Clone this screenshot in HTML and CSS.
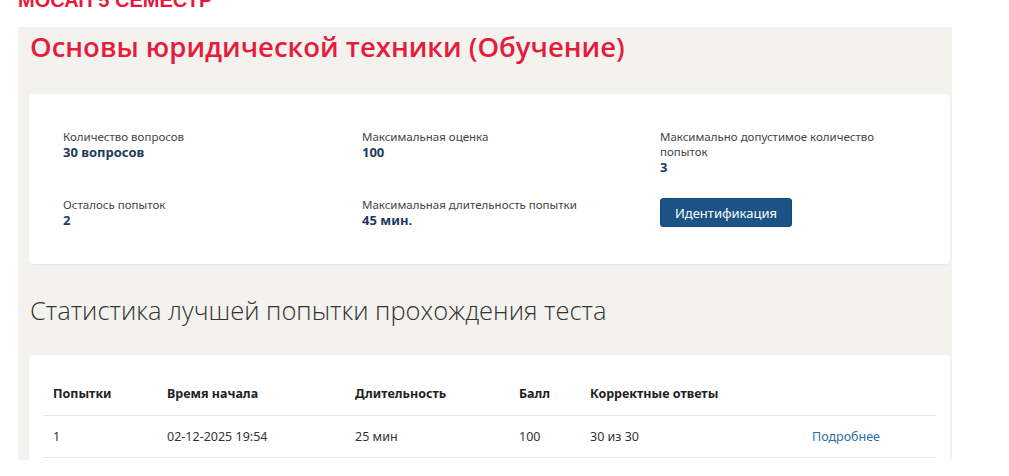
FILE: index.html
```html
<!DOCTYPE html>
<html lang="ru">
<head>
<meta charset="utf-8">
<title>Основы юридической техники</title>
<link rel="stylesheet" href="styles.css">
</head>
<body>
<div class="page">
  <div class="course">МОСАП 5 СЕМЕСТР</div>
  <div class="panel">
    <h1 class="title">Основы юридической техники (Обучение)</h1>
    <div class="card info">
      <div class="item">
        <div class="label">Количество вопросов</div>
        <div class="value">30 вопросов</div>
      </div>
      <div class="item">
        <div class="label">Максимальная оценка</div>
        <div class="value">100</div>
      </div>
      <div class="item">
        <div class="label">Максимально допустимое количество попыток</div>
        <div class="value">3</div>
      </div>
      <div class="item">
        <div class="label">Осталось попыток</div>
        <div class="value">2</div>
      </div>
      <div class="item">
        <div class="label">Максимальная длительность попытки</div>
        <div class="value">45 мин.</div>
      </div>
      <div class="item">
        <button class="btn">Идентификация</button>
      </div>
    </div>
    <h2 class="subtitle">Статистика лучшей попытки прохождения теста</h2>
    <div class="card stats">
      <table class="table">
        <colgroup>
          <col class="c1"><col class="c2"><col class="c3"><col class="c4"><col class="c5"><col class="c6">
        </colgroup>
        <thead>
          <tr>
            <th>Попытки</th>
            <th>Время начала</th>
            <th>Длительность</th>
            <th>Балл</th>
            <th>Корректные ответы</th>
            <th></th>
          </tr>
        </thead>
        <tbody>
          <tr>
            <td>1</td>
            <td>02-12-2025 19:54</td>
            <td>25 мин</td>
            <td>100</td>
            <td>30 из 30</td>
            <td><a class="more" href="#">Подробнее</a></td>
          </tr>
        </tbody>
      </table>
    </div>
  </div>
</div>
</body>
</html>
```

FILE: styles.css
```css
* { box-sizing: border-box; }
html, body { margin: 0; padding: 0; background: #ffffff; }
body {
  font-family: "Noto Sans", "Open Sans", sans-serif;
  color: #333;
  overflow: hidden;
}
.page {
  padding-left: 18px;
  width: 952px;
}
.course {
  margin-top: -11px;
  height: 38px;
  font-family: "Liberation Sans", Arial, sans-serif;
  font-weight: bold;
  font-size: 20px;
  line-height: 23px;
  color: #e8173a;
}
.panel {
  background: #f3f2ee;
  padding: 0 2px 0 11px;
  height: 433px;
  overflow: hidden;
}
.title {
  margin: 0;
  padding: 1px 0 0 1px;
  height: 67px;
  font-family: "Open Sans", sans-serif;
  font-weight: 600;
  font-size: 27.5px;
  line-height: 38px;
  color: #e41d3d;
}
.card {
  background: #ffffff;
  border-radius: 4px;
  box-shadow: 0 1px 1px rgba(0,0,0,0.04);
}
.info {
  display: grid;
  grid-template-columns: 299px 298px 1fr;
  row-gap: 22px;
  padding: 35px 0 37px 34px;
  height: 170px;
  align-items: start;
}
.label {
  font-size: 11.5px;
  line-height: 15px;
  color: #444;
  max-width: 230px;
}
.value {
  font-size: 13px;
  line-height: 16px;
  font-weight: bold;
  color: #1d3a5e;
}
.btn {
  margin-top: 1px;
  width: 132px;
  height: 29px;
  background: #1b5386;
  color: #fff;
  border: 1px solid #174a78;
  border-radius: 3px;
  font-family: "Noto Sans", "Open Sans", sans-serif;
  font-size: 13px;
  padding: 0;
}
.subtitle {
  margin: 0;
  padding: 28px 0 0 1px;
  height: 91px;
  font-family: "Open Sans", sans-serif;
  font-weight: 300;
  font-size: 25.5px;
  line-height: 36px;
  color: #333;
}
.stats {
  padding: 18px 14px 20px 14px;
}
.table {
  width: 893px;
  border-collapse: collapse;
  table-layout: fixed;
  font-size: 12.5px;
}
.c1 { width: 114px; }
.c2 { width: 188px; }
.c3 { width: 164px; }
.c4 { width: 71px; }
.c5 { width: 222px; }
.c6 { width: 134px; }
.table th, .table td {
  text-align: left;
  padding: 0 10px;
  height: 42px;
  border-bottom: 1px solid #e6e6e6;
}
.table th {
  font-weight: bold;
  color: #222;
  vertical-align: middle;
}
.table td {
  color: #333;
}
.more {
  color: #2e6da4;
  text-decoration: none;
}
```
